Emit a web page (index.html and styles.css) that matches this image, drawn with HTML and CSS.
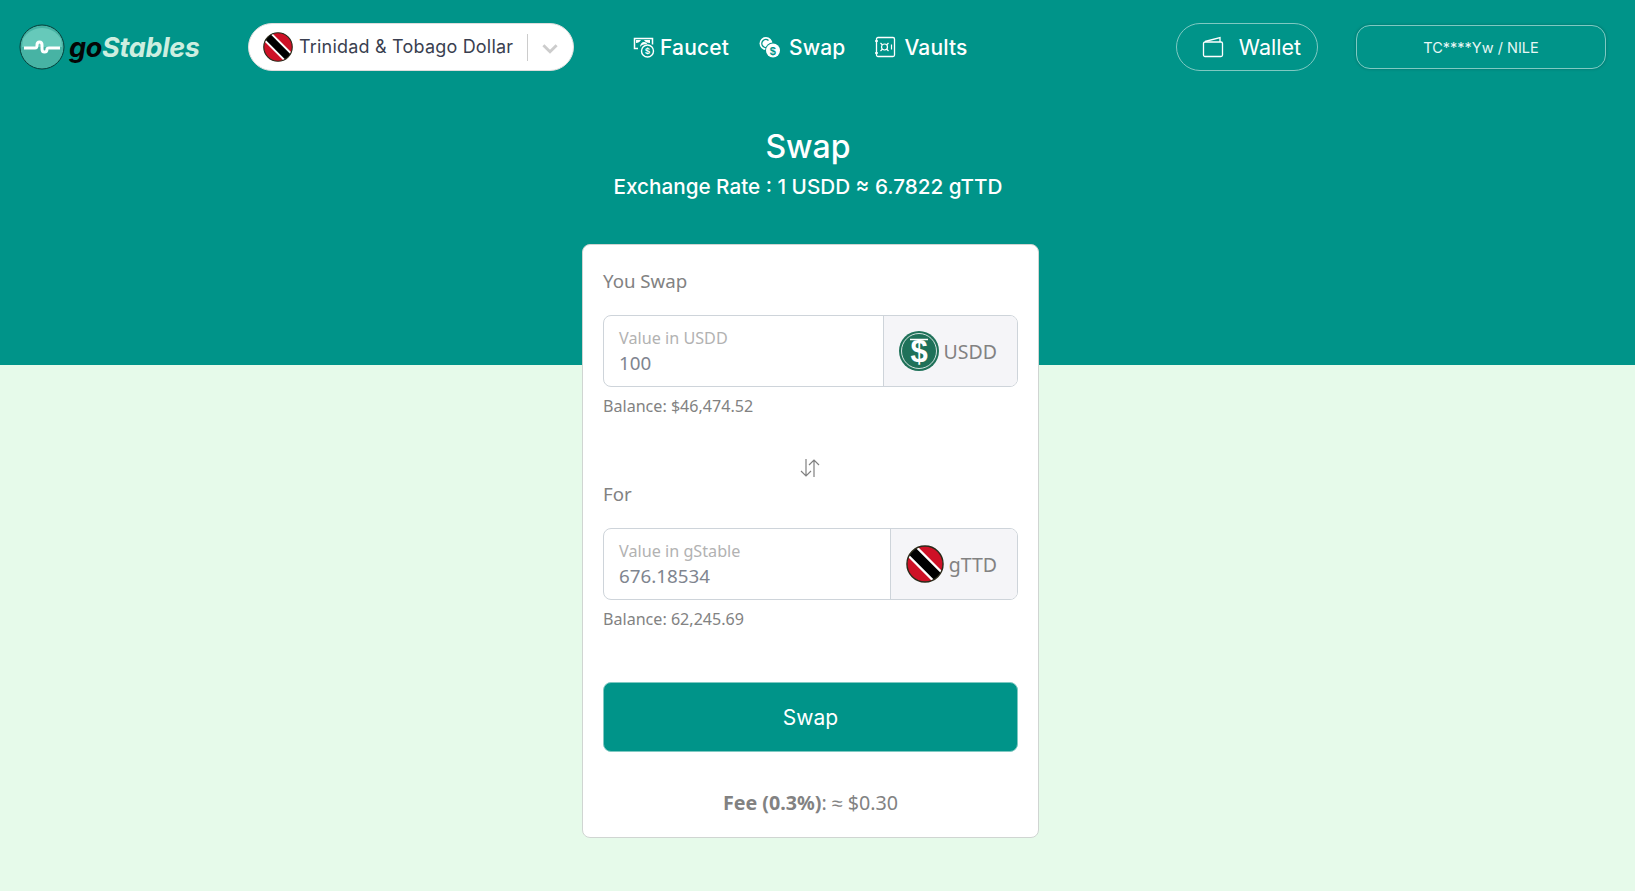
FILE: index.html
```html
<!DOCTYPE html>
<html lang="en">
<head>
    <meta charset="UTF-8">
    <meta name="viewport" content="width=device-width, initial-scale=1.0">
    <title>goStables</title>
    <link rel="stylesheet" href="styles.css">
</head>
<body>
    <div class="hero">
        <nav class="navbar">
            <a class="logo" href="#">
                <svg class="logo-mark" viewBox="0 0 46 46">
                    <circle cx="23" cy="23" r="22" fill="#47b3a4" stroke="#063f3a" stroke-width="1"/>
                    <path d="M4 15a22 22 0 0 1 38 0l1 8H3z" fill="#66c9ba"/>
                    <path d="M5 24h11c2 0 2-1 2-3 0-4 5-4 5 0v4c0 4 5 4 5 0 0-1 1-1 2-1h11" fill="none" stroke="#fff" stroke-width="3"/>
                </svg>
                <span class="logo-text"><span class="logo-go">go</span>Stables</span>
            </a>
            <div class="currency-select">
                <svg class="flag-small" viewBox="0 0 40 40">
                    <use href="#flag-tt"/>
                </svg>
                <span class="currency-name">Trinidad &amp; Tobago Dollar</span>
                <span class="select-sep"></span>
                <svg class="chevron" viewBox="0 0 16 10"><path d="M2 2l6 6 6-6" fill="none" stroke="#ccc" stroke-width="2.6"/></svg>
            </div>
            <div class="nav-links">
                <a class="nav-link nav-link-tight" href="#">
                    <svg class="nav-icon" viewBox="0 0 22 22">
                        <path d="M5 12.500H1.500V2.500H19.500V8.500" fill="none" stroke="#fff" stroke-width="1.500"/>
                        <path d="M3 4h5c-1 2-3 3-5 3zM11 4h6v3c-3 0-5-1-6-3zM7 11c0-3 2-5 4-5s3 1 3 2c-3 0-6 1-7 3z" fill="#fff"/>
                        <circle cx="14.500" cy="15" r="6" fill="#009489" stroke="#fff" stroke-width="1.400"/>
                        <text class="coin-glyph" x="14.500" y="18.200" font-size="9" fill="#fff">$</text>
                    </svg>
                    <span>Faucet</span>
                </a>
                <a class="nav-link" href="#">
                    <svg class="nav-icon" viewBox="0 0 22 22">
                        <circle cx="7" cy="7.500" r="6.500" fill="#fff"/>
                        <path d="M9.500 4.500a4 4 0 1 0 0 6" fill="none" stroke="#009489" stroke-width="1.400"/>
                        <circle cx="14" cy="14.500" r="8" fill="#009489"/>
                        <circle cx="14" cy="14.500" r="7" fill="#fff"/>
                        <text class="coin-glyph" x="14" y="18.500" font-size="11" fill="#009489">$</text>
                    </svg>
                    <span>Swap</span>
                </a>
                <a class="nav-link" href="#">
                    <svg class="nav-icon" viewBox="0 0 22 22">
                        <rect x="2.500" y="1.500" width="18" height="19" rx="1.500" fill="none" stroke="#fff" stroke-width="1.300"/>
                        <path d="M1 5h3M1 17h3" stroke="#fff" stroke-width="1.300"/>
                        <circle cx="10.500" cy="11" r="3" fill="none" stroke="#fff" stroke-width="1.200"/>
                        <path d="M6.500 7l2 2M14.500 7l-2 2M6.500 15l2-2M14.500 15l-2-2M17.500 8.500v5" stroke="#fff" stroke-width="1.200"/>
                    </svg>
                    <span>Vaults</span>
                </a>
            </div>
            <button class="wallet-button">
                <svg class="nav-icon" viewBox="0 0 22 22">
                    <rect x="1.500" y="6" width="19" height="14.500" rx="1.500" fill="none" stroke="#fff" stroke-width="1.300"/>
                    <path d="M3 5.500L18 1.500V6" fill="none" stroke="#fff" stroke-width="1.300"/>
                </svg>
                <span>Wallet</span>
            </button>
            <button class="account-button">TC****Yw / NILE</button>
        </nav>
        <h1 class="title">Swap</h1>
        <p class="rate">Exchange Rate : 1 USDD &#8776; 6.7822 gTTD</p>
    </div>

    <div class="card">
        <div class="field-label">You Swap</div>
        <div class="input-group">
            <div class="input-box">
                <span class="input-hint">Value in USDD</span>
                <span class="input-value">100</span>
            </div>
            <div class="addon">
                <svg class="token-icon" viewBox="0 0 40 40">
                    <circle cx="20" cy="20" r="20" fill="#1f7159"/>
                    <circle cx="20" cy="20" r="17.500" fill="none" stroke="#fff" stroke-width="0.800"/>
                    <path d="M11 8.500h18" stroke="#fff" stroke-width="1.600"/>
                    <text class="token-glyph" x="20" y="31" font-size="31" fill="#fff">$</text>
                </svg>
                <span>USDD</span>
            </div>
        </div>
        <div class="balance">Balance: $46,474.52</div>

        <svg class="swap-arrows" viewBox="0 0 22 22">
            <path d="M7 2v17M2 14l5 5 5-5M15 20V3M10 8l5-5 5 5" fill="none" stroke="#808080" stroke-width="1.200"/>
        </svg>

        <div class="field-label">For</div>
        <div class="input-group">
            <div class="input-box">
                <span class="input-hint">Value in gStable</span>
                <span class="input-value">676.18534</span>
            </div>
            <div class="addon addon-gttd">
                <svg class="token-icon token-flag" viewBox="0 0 40 40">
                    <use href="#flag-tt"/>
                </svg>
                <span>gTTD</span>
            </div>
        </div>
        <div class="balance">Balance: 62,245.69</div>

        <button class="swap-button">Swap</button>
        <div class="fee"><b>Fee (0.3%)</b>: &#8776; $0.30</div>
    </div>

    <svg class="svg-defs" width="0" height="0">
        <defs>
            <clipPath id="flag-clip"><circle cx="20" cy="20" r="19"/></clipPath>
            <g id="flag-tt">
                <g clip-path="url(#flag-clip)">
                    <rect width="40" height="40" fill="#ce1126"/>
                    <path d="M0 0L40 40" stroke="#fff" stroke-width="15"/>
                    <path d="M0 0L40 40" stroke="#000" stroke-width="10"/>
                </g>
                <circle cx="20" cy="20" r="19" fill="none" stroke="#2a2a1a" stroke-width="1.500"/>
            </g>
        </defs>
    </svg>
</body>
</html>
```

FILE: styles.css
```css
body {
    margin: 0;
    padding: 0;
    min-height: 891px;
    background-color: #e6faea;
    font-family: "Noto Sans", sans-serif;
    color: #828282;
}

.hero {
    height: 365px;
    background-color: #009489;
    color: #fff;
    text-align: center;
    font-family: Inter, sans-serif;
}

.navbar {
    display: flex;
    align-items: center;
    height: 94px;
    padding: 0 29px 0 19px;
    text-align: left;
}

.logo {
    display: flex;
    align-items: center;
    width: 229px;
    gap: 4px;
    text-decoration: none;
}

.logo-mark {
    width: 46px;
    height: 46px;
    flex: none;
}

.logo-text {
    font-size: 27px;
    font-weight: 700;
    font-style: italic;
    letter-spacing: -0.3px;
    color: #cdeee0;
}

.logo-go {
    color: #050505;
}

.currency-select {
    display: flex;
    align-items: center;
    box-sizing: border-box;
    width: 326px;
    height: 48px;
    padding: 0 14px;
    background-color: #fff;
    border: 1px solid #ddd;
    border-radius: 24px;
    color: #3a3f50;
}

.flag-small {
    width: 30px;
    height: 30px;
    flex: none;
}

.currency-name {
    margin: 0 0 2px 6px;
    font-size: 18px;
    letter-spacing: 0.2px;
    white-space: nowrap;
}

.select-sep {
    width: 1px;
    height: 27px;
    margin-left: auto;
    background-color: #ccc;
}

.chevron {
    width: 18px;
    height: 11px;
    margin: 2px 0 0 13px;
    flex: none;
}

.nav-links {
    display: flex;
    margin-left: 59px;
    gap: 29px;
}

.nav-link {
    display: flex;
    align-items: center;
    gap: 8px;
    color: #fff;
    text-decoration: none;
    font-size: 21px;
    font-weight: 500;
    letter-spacing: 0.15px;
}

.nav-link-tight {
    gap: 5px;
    margin-right: 1px;
}

.nav-icon {
    width: 22px;
    height: 22px;
    flex: none;
}

.coin-glyph {
    font-family: "Liberation Sans", sans-serif;
    font-weight: 700;
    text-anchor: middle;
}

.wallet-button {
    display: flex;
    align-items: center;
    justify-content: flex-end;
    gap: 15px;
    box-sizing: border-box;
    width: 142px;
    height: 48px;
    margin-left: auto;
    padding: 0 16px 0 0;
    background: none;
    border: 1px solid #7fc9c2;
    border-radius: 24px;
    color: #fff;
    font-family: Inter, sans-serif;
    font-size: 21.500px;
}

.account-button {
    box-sizing: border-box;
    width: 250px;
    height: 44px;
    margin-left: 38px;
    padding-top: 2px;
    background: none;
    border: 1px solid #7fc9c2;
    border-radius: 14px;
    box-shadow: 0 0 3px rgba(0, 0, 0, 0.25);
    color: #e8f7f5;
    font-family: Inter, sans-serif;
    font-size: 14.500px;
}

.title {
    width: 1616px;
    margin: 32px 0 0;
    font-size: 32px;
    font-weight: 500;
    line-height: 42px;
}

.rate {
    width: 1616px;
    margin: 5px 0 0;
    font-size: 20.700px;
    font-weight: 500;
    line-height: 28px;
}

.card {
    box-sizing: border-box;
    width: 457px;
    height: 594px;
    margin: -121px 0 0 582px;
    padding: 21px 20px 20px;
    position: relative;
    background-color: #fff;
    border: 1px solid #d0d5d2;
    border-radius: 8px;
}

.field-label {
    margin-bottom: 19px;
    font-size: 18.700px;
    line-height: 30px;
}

.input-group {
    display: flex;
    height: 72px;
    box-sizing: border-box;
    border: 1px solid #ced4da;
    border-radius: 8px;
    overflow: hidden;
}

.input-box {
    display: flex;
    flex-direction: column;
    flex: 1;
    padding: 10px 15px 0;
    min-width: 0;
}

.input-hint {
    font-size: 16.200px;
    line-height: 24px;
    color: #b2b2b2;
}

.input-value {
    font-size: 18.800px;
    line-height: 26px;
    color: #7f858f;
}

.addon {
    display: flex;
    align-items: center;
    gap: 5px;
    padding: 0 20px 0 15px;
    background-color: #f5f5f8;
    border-left: 1px solid #ced4da;
    font-size: 19.500px;
}

.token-icon {
    width: 40px;
    height: 40px;
    flex: none;
}

.token-flag {
    width: 38px;
    height: 38px;
}

.token-glyph {
    font-family: "Liberation Sans", sans-serif;
    font-weight: 700;
    text-anchor: middle;
}

.balance {
    margin-top: 6px;
    font-size: 16.100px;
    line-height: 26px;
}

.swap-arrows {
    display: block;
    width: 22px;
    height: 22px;
    margin: 38px 0 0 196px;
}

.swap-button {
    display: block;
    width: 100%;
    height: 70px;
    margin-top: 50px;
    background-color: #009489;
    border: 1px solid #7fc9c2;
    border-radius: 8px;
    color: #fff;
    font-family: Inter, sans-serif;
    font-size: 21px;
}

.fee {
    margin-top: 38px;
    text-align: center;
    font-size: 19.700px;
    line-height: 26px;
}

.svg-defs {
    display: block;
    height: 0;
}
```
